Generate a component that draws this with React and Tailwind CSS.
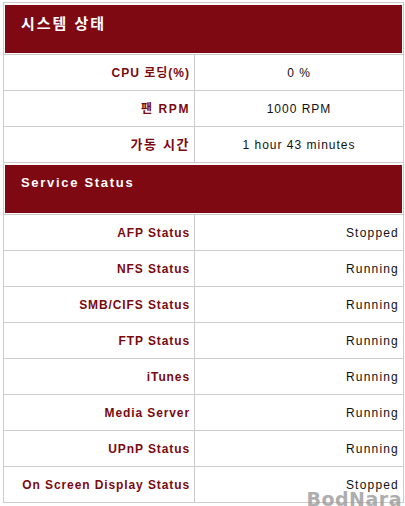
const systemRows = [
  { label: "CPU 로딩(%)", value: "0 %", labelClass: "tracking-[1px]" },
  { label: "팬 RPM", value: "1000 RPM", labelClass: "tracking-[1.6px]" },
  { label: "가동 시간", value: "1 hour 43 minutes", labelClass: "text-[13px] tracking-[1.6px]" },
];

const serviceRows = [
  { label: "AFP Status", value: "Stopped" },
  { label: "NFS Status", value: "Running" },
  { label: "SMB/CIFS Status", value: "Running" },
  { label: "FTP Status", value: "Running" },
  { label: "iTunes", value: "Running" },
  { label: "Media Server", value: "Running" },
  { label: "UPnP Status", value: "Running" },
  { label: "On Screen Display Status", value: "Stopped" },
];

const font = { fontFamily: '"Liberation Sans", "Noto Sans CJK KR", Arial, sans-serif' };

const SectionHeader = ({ title, korean }) => (
  <div className="mx-[1px] mt-[2px] mb-[1px] h-[48px] bg-[#7f0912] pl-[16px] pt-[10px]">
    <span
      className={
        korean
          ? "block text-[15px] leading-[18px] font-bold tracking-[2px] text-white"
          : "block text-[13px] leading-[16px] font-bold tracking-[1.7px] text-white"
      }
    >
      {title}
    </span>
  </div>
);

const Row = ({ label, value, center, labelClass }) => (
  <div className="flex h-[36px] border-t border-[#cccccc]">
    <div
      className={
        "flex w-[191px] items-center justify-end border-r border-[#cccccc] pr-[4px] text-[12px] font-bold text-[#7a0a10] " +
        (labelClass || "tracking-[0.9px]")
      }
    >
      {label}
    </div>
    <div
      className={
        center
          ? "flex flex-1 items-center justify-center text-[12px] tracking-[1px] text-[#111]"
          : "flex flex-1 items-center justify-end pr-[4px] text-[12px] tracking-[1.2px] text-[#111]"
      }
    >
      {value}
    </div>
  </div>
);

const App = () => {
  return (
    <div className="relative h-[506px] w-[405px] overflow-hidden bg-white pt-[2px] pl-[3px]" style={font}>
      <div className="w-[401px] border border-[#cccccc]">
        <SectionHeader title="시스템 상태" korean />
        {systemRows.map((row, index) => (
          <Row key={index} label={row.label} value={row.value} labelClass={row.labelClass} center />
        ))}
        <div className="border-t border-[#cccccc]">
          <SectionHeader title="Service Status" />
        </div>
        {serviceRows.map((row, index) => (
          <Row key={index} label={row.label} value={row.value} />
        ))}
      </div>
      {/* watermark */}
      <div
        className="absolute right-[3px] bottom-[-3px] text-[19px] leading-[20px] font-black tracking-[0.5px] text-[#9a9a9a] opacity-80"
        style={{ fontFamily: '"DejaVu Sans", sans-serif' }}
      >
        BodNara
      </div>
    </div>
  );
};

export default App;
